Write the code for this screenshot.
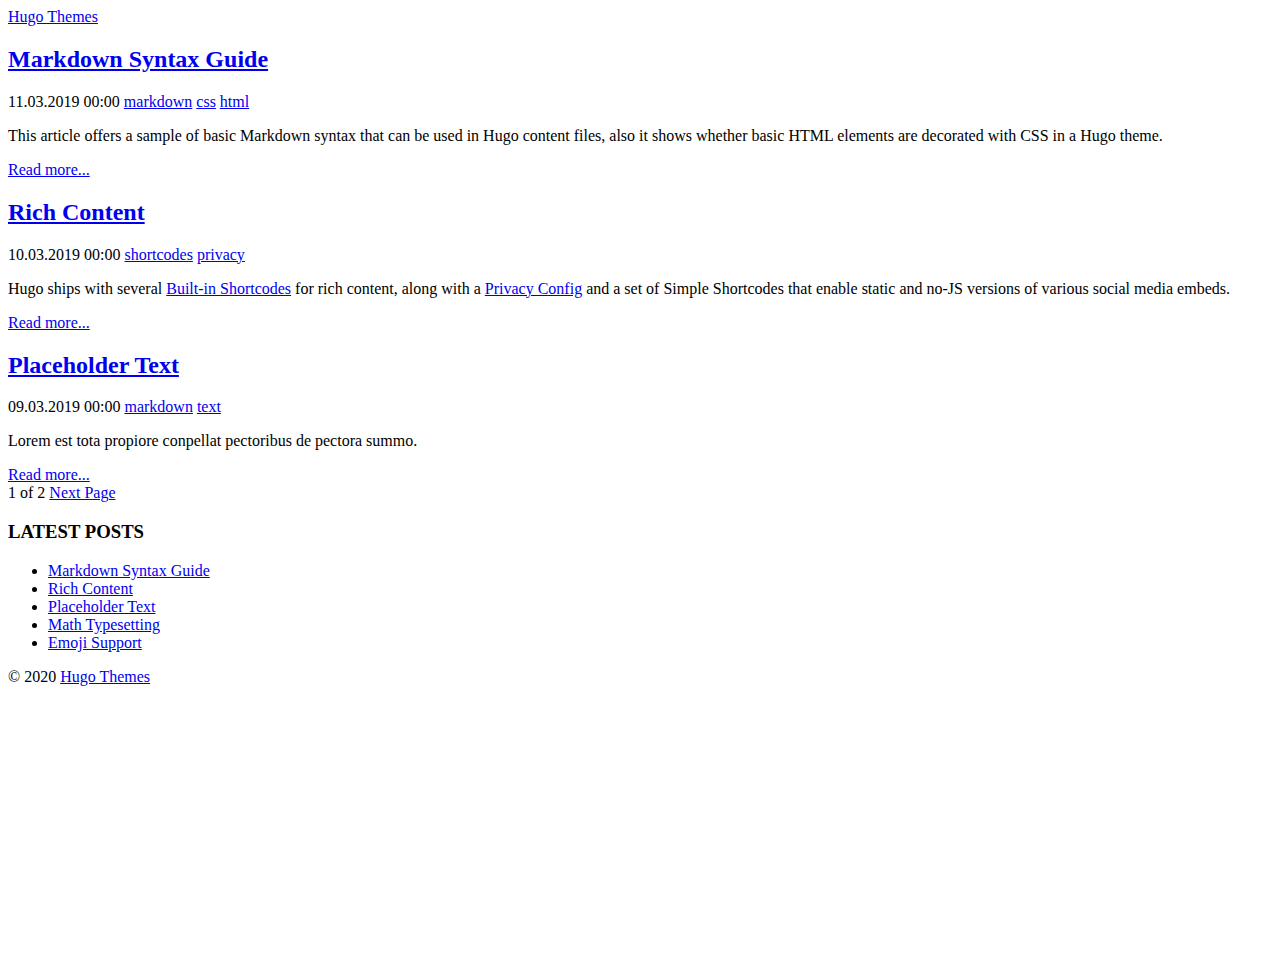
const posts = [
  {
    title: 'Markdown Syntax Guide',
    date: '11.03.2019 00:00',
    tags: ['markdown', 'css', 'html'],
    summary: (
      <>
        This article offers a sample of basic Markdown syntax that can be used in Hugo content files, also it shows
        whether basic HTML elements are decorated with CSS in a Hugo theme.
      </>
    ),
  },
  {
    title: 'Rich Content',
    date: '10.03.2019 00:00',
    tags: ['shortcodes', 'privacy'],
    summary: (
      <>
        Hugo ships with several <Link>Built-in Shortcodes</Link> for rich content, along with a{' '}
        <Link>Privacy Config</Link> and a set of Simple Shortcodes that enable static and no-JS versions of various
        social media embeds.
      </>
    ),
  },
  {
    title: 'Placeholder Text',
    date: '09.03.2019 00:00',
    tags: ['markdown', 'text'],
    summary: <>Lorem est tota propiore conpellat pectoribus de pectora summo.</>,
  },
];

const latest = ['Markdown Syntax Guide', 'Rich Content', 'Placeholder Text', 'Math Typesetting', 'Emoji Support'];

function Link({ children }: { children: React.ReactNode }) {
  return (
    <a href="#" className="text-[#0000ee] underline">
      {children}
    </a>
  );
}

export default function App() {
  return (
    <div className="m-[8px] font-['Liberation_Serif',serif] text-[16px] leading-[normal] text-black">
      <header>
        <Link>Hugo Themes</Link>
      </header>

      {posts.map((post, i) => (
        <article key={i}>
          <h2 className="my-[19.92px] text-[24px] font-bold">
            <Link>{post.title}</Link>
          </h2>
          <p className="my-[16px]">
            {post.date}{' '}
            {post.tags.map((t, j) => (
              <span key={t}>
                <Link>{t}</Link>
                {j < post.tags.length - 1 ? ' ' : ''}
              </span>
            ))}
          </p>
          <p className="my-[16px]">{post.summary}</p>
          <div>
            <Link>Read more...</Link>
          </div>
        </article>
      ))}

      <div>
        1 of 2 <Link>Next Page</Link>
      </div>

      <aside>
        <h3 className="my-[18.72px] text-[18.72px] font-bold">LATEST POSTS</h3>
        <ul className="my-[16px] list-disc pl-[40px]">
          {latest.map((t) => (
            <li key={t}>
              <Link>{t}</Link>
            </li>
          ))}
        </ul>
      </aside>

      <footer>
        <p className="my-[16px]">
          © 2020 <Link>Hugo Themes</Link>
        </p>
      </footer>
    </div>
  );
}
